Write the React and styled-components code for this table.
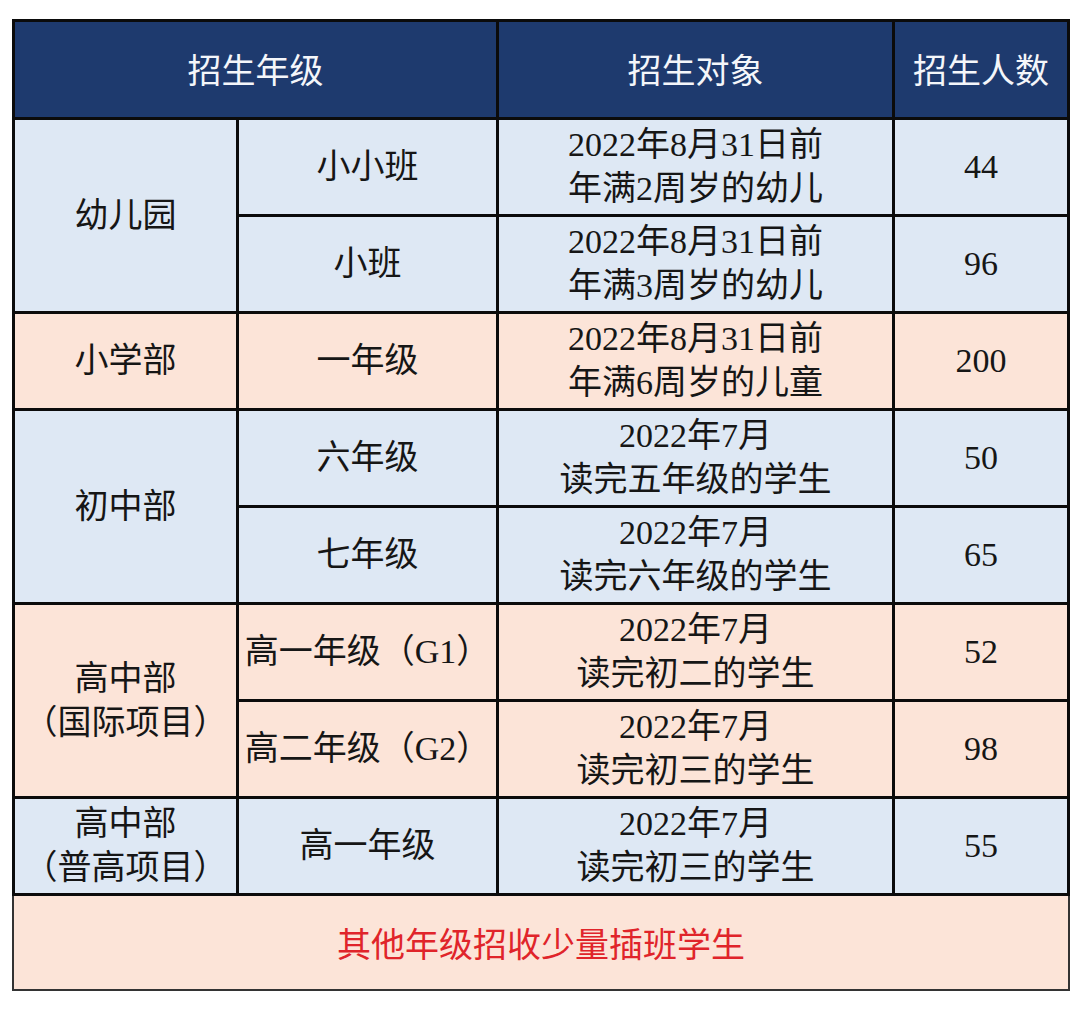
import React from 'react';
import styled, { createGlobalStyle } from 'styled-components';

const GlobalStyle = createGlobalStyle`
  body {
    margin: 0;
    background: #ffffff;
    font-family: "Liberation Serif", "Noto Sans CJK SC", serif;
  }
`;

const rows = [
  { group: '幼儿园', span: 2, tone: 'blue', grade: '小小班', target: ['2022年8月31日前', '年满2周岁的幼儿'], count: '44' },
  { grade: '小班', tone: 'blue', target: ['2022年8月31日前', '年满3周岁的幼儿'], count: '96' },
  { group: '小学部', span: 1, tone: 'peach', grade: '一年级', target: ['2022年8月31日前', '年满6周岁的儿童'], count: '200' },
  { group: '初中部', span: 2, tone: 'blue', grade: '六年级', target: ['2022年7月', '读完五年级的学生'], count: '50' },
  { grade: '七年级', tone: 'blue', target: ['2022年7月', '读完六年级的学生'], count: '65' },
  { group: ['高中部', '（国际项目）'], span: 2, tone: 'peach', grade: '高一年级（G1）', target: ['2022年7月', '读完初二的学生'], count: '52' },
  { grade: '高二年级（G2）', tone: 'peach', target: ['2022年7月', '读完初三的学生'], count: '98' },
  { group: ['高中部', '（普高项目）'], span: 1, tone: 'blue', grade: '高一年级', target: ['2022年7月', '读完初三的学生'], count: '55' },
];

const tones = {
  blue: '#dee8f4',
  peach: '#fce4d8',
};

const Page = styled.div`
  padding: 19px 10px 0 12px;
`;

const Table = styled.div`
  display: grid;
  grid-template-columns: 221px 257px 393px 172px;
  grid-template-rows: 95px repeat(8, 94px);
  gap: 3px;
  padding: 3px;
  background: #0b0b0b;
  width: fit-content;
`;

const HeadCell = styled.div`
  grid-column: span ${(p) => p.span || 1};
  background: #1e3a6e;
  color: #f4f6fa;
  font-size: 34px;
  display: flex;
  align-items: center;
  justify-content: center;
  padding-bottom: 2px;
`;

const Cell = styled.div`
  grid-row: span ${(p) => p.span || 1};
  background: ${(p) => tones[p.tone]};
  color: #161616;
  font-size: 34px;
  line-height: 44px;
  display: flex;
  flex-direction: column;
  align-items: center;
  justify-content: center;
  text-align: center;
  white-space: nowrap;
`;

const Footer = styled.div`
  width: 1058px;
  box-sizing: border-box;
  height: 95px;
  background: #fce4d8;
  border: 2px solid #333333;
  border-top: none;
  display: flex;
  align-items: center;
  justify-content: center;
  color: #e0242a;
  font-size: 34px;
`;

const Lines = ({ text }) =>
  (Array.isArray(text) ? text : [text]).map((t) => <span key={t}>{t}</span>);

export default function App() {
  return (
    <>
      <GlobalStyle />
      <Page>
        <Table>
          <HeadCell span={2}>招生年级</HeadCell>
          <HeadCell>招生对象</HeadCell>
          <HeadCell>招生人数</HeadCell>
          {rows.map((r, i) => (
            <React.Fragment key={i}>
              {r.group && (
                <Cell span={r.span} tone={r.tone}>
                  <Lines text={r.group} />
                </Cell>
              )}
              <Cell tone={r.tone}>{r.grade}</Cell>
              <Cell tone={r.tone}>
                <Lines text={r.target} />
              </Cell>
              <Cell tone={r.tone}>{r.count}</Cell>
            </React.Fragment>
          ))}
        </Table>
        <Footer>其他年级招收少量插班学生</Footer>
      </Page>
    </>
  );
}
